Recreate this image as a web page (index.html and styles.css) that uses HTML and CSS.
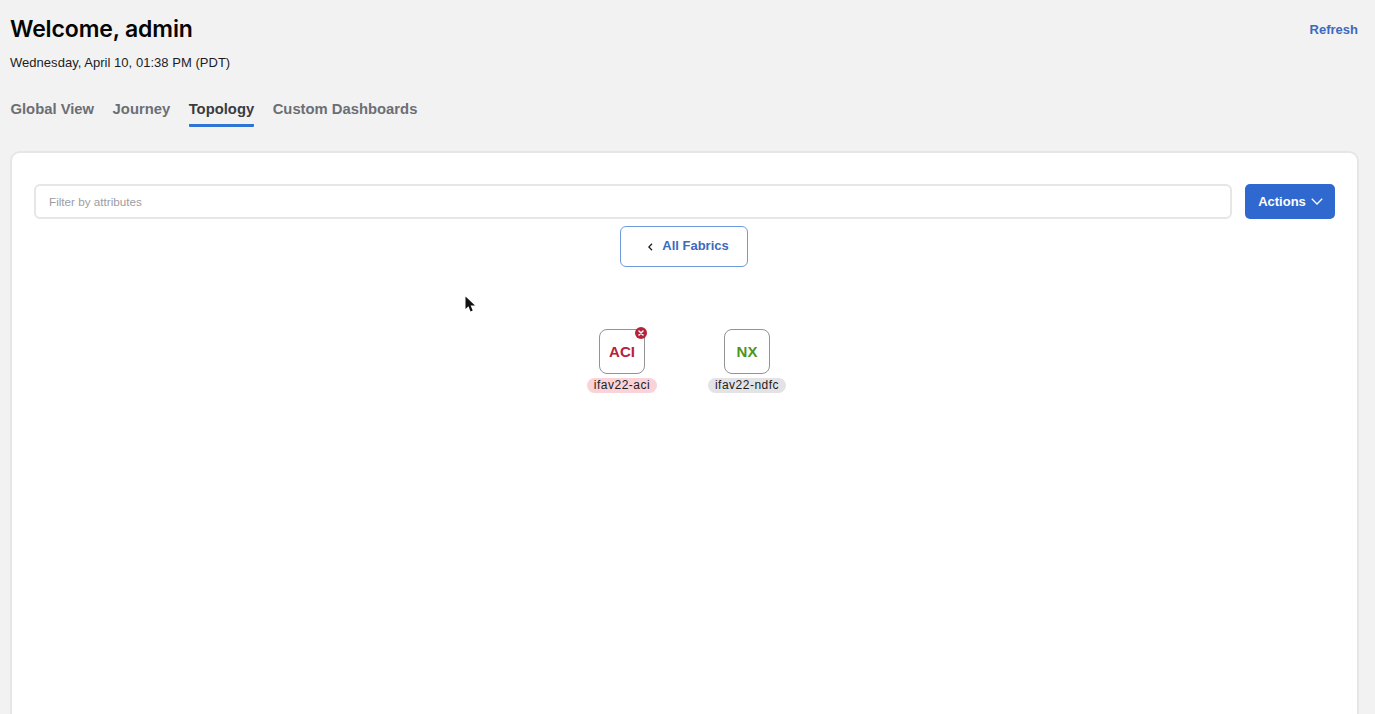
FILE: index.html
```html
<!DOCTYPE html>
<html lang="en">
<head>
<meta charset="utf-8">
<title>Welcome, admin</title>
<link rel="stylesheet" href="styles.css">
</head>
<body>
<header class="top">
  <div class="greeting">
    <h1 class="title">Welcome, admin</h1>
    <p class="date">Wednesday, April 10, 01:38 PM (PDT)</p>
  </div>
  <a class="refresh">Refresh</a>
</header>
<nav class="tabs">
  <a class="tab">Global View</a>
  <a class="tab">Journey</a>
  <a class="tab active">Topology</a>
  <a class="tab">Custom Dashboards</a>
</nav>
<main class="card">
  <div class="toolbar">
    <div class="filter">Filter by attributes</div>
    <button class="actions">Actions
      <svg class="chev" width="12" height="7" viewBox="0 0 12 7"><path d="M.8.8 6 6 11.2.8" fill="none" stroke="#fff" stroke-width="1.3"/></svg>
    </button>
  </div>
  <div class="back-row">
    <button class="back">
      <svg class="back-chev" width="5" height="8" viewBox="0 0 5 8"><path d="M4 .7.9 4 4 7.3" fill="none" stroke="#222" stroke-width="1.3"/></svg>
      All Fabrics
    </button>
  </div>
  <div class="canvas">
    <svg class="cursor" width="11" height="17" viewBox="0 0 11 17"><path d="M.5.5V13l3-2.8 2 5.3 2.2-.9-2.1-5H10z" fill="#111"/></svg>
    <div class="node node-aci">
      <div class="node-box aci">ACI
        <svg class="badge" width="12" height="12" viewBox="0 0 12 12"><circle cx="6" cy="6" r="6" fill="#b5233a"/><path d="M4 4l4 4M8 4l-4 4" stroke="#fff" stroke-width="1.5" stroke-linecap="round"/></svg>
      </div>
      <span class="label label-red">ifav22-aci</span>
    </div>
    <div class="node node-nx">
      <div class="node-box nx">NX</div>
      <span class="label label-grey">ifav22-ndfc</span>
    </div>
  </div>
</main>
</body>
</html>
```
FILE: styles.css
```css
* { box-sizing: border-box; }
html, body { margin: 0; height: 714px; overflow: hidden; }
body {
  background: #f2f2f3;
  font-family: "Liberation Sans", Arial, sans-serif;
  color: #111;
  padding: 0 16px 0 11px;
  display: flex;
  flex-direction: column;
}
.top { display: flex; justify-content: space-between; align-items: flex-start; padding: 15px 1px 0 0; }
.greeting { margin-left: -1px; }
.title { margin: 0; font: 600 23px/29px Inter, "Liberation Sans", sans-serif; letter-spacing: -.14px; color: #050505; }
.date { margin: 11px 0 0; font-size: 13px; line-height: 16px; letter-spacing: .03px; color: #1c1c1e; }
.refresh { margin-top: 7px; font-size: 13px; line-height: 16px; font-weight: 700; color: #3d69bd; }
.tabs { display: flex; gap: 18.5px; margin: 26px 0 0 -.5px; height: 36px; }
.tab { font-size: 14.8px; line-height: 20px; font-weight: 700; color: #6c6e75; padding-top: 2px; height: 30px; }
.tab.active { color: #3a3b40; border-bottom: 3px solid #2d74d4; border-radius: 1px; }
.card {
  margin: 18px 0 0 -1px;
  flex: 1;
  min-height: 0;
  background: #fff;
  border: 2px solid #e6e6e8;
  border-bottom: 0;
  border-radius: 10px 10px 0 0;
  padding: 31px 22px 0;
  display: flex;
  flex-direction: column;
}
.toolbar { display: flex; gap: 13px; }
.filter {
  flex: 1;
  height: 35px;
  border: 2px solid #e6e6e8;
  border-radius: 6px;
  padding-left: 13px;
  font-size: 11.7px;
  line-height: 31px;
  color: #9d9da2;
}
.actions {
  width: 90px;
  height: 35px;
  border: 0;
  border-radius: 5px;
  background: #2f68cf;
  color: #fff;
  font: 700 13px "Liberation Sans", Arial, sans-serif;
  display: flex;
  align-items: center;
  justify-content: center;
  gap: 5px;
  padding: 0 0 0 1px;
}
.back-row { display: flex; justify-content: center; margin-top: 7px; padding-right: 1px; }
.back {
  width: 128px;
  height: 41px;
  background: #fff;
  border: 1px solid #6f9ad8;
  border-radius: 6px;
  color: #3d69bd;
  font: 700 13px "Liberation Sans", Arial, sans-serif;
  display: flex;
  align-items: center;
  justify-content: center;
  gap: 9px;
  padding: 0 0 2px 9px;
}
.back-chev { margin-top: 3px; }
.canvas { position: relative; flex: 1; }
.cursor { position: absolute; left: 431px; top: 29px; }
.node { position: absolute; top: 62px; width: 90px; display: flex; flex-direction: column; align-items: center; }
.node-aci { left: 543px; }
.node-nx { left: 668px; }
.node-box {
  position: relative;
  width: 46px;
  height: 45px;
  background: #fff;
  border: 1px solid #929397;
  border-radius: 8px;
  display: flex;
  align-items: center;
  justify-content: center;
  font-size: 15px;
  font-weight: 700;
  padding-bottom: 1px;
}
.aci { color: #b5233a; }
.nx { color: #4d951c; }
.badge { position: absolute; top: -3px; right: -3px; }
.label {
  margin-top: 4px;
  height: 15px;
  padding: 0 7px;
  border-radius: 8px;
  font-size: 12px;
  line-height: 15px;
  letter-spacing: .5px;
  color: #1c1c1e;
  white-space: nowrap;
}
.label-red { background: #f9d3d8; }
.label-grey { background: #e3e3e6; }
```
